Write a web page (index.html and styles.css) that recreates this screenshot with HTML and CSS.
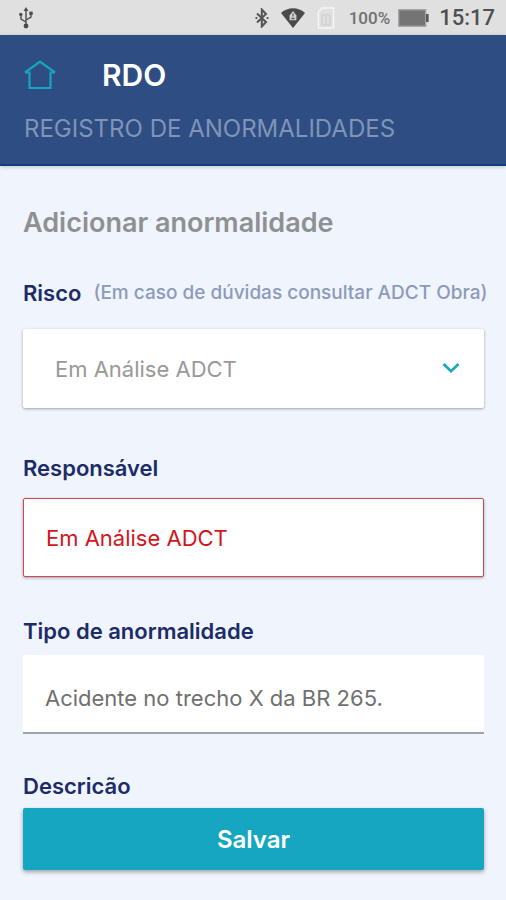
FILE: index.html
```html
<!DOCTYPE html>
<html lang="pt-BR">
<head>
    <meta charset="UTF-8">
    <meta name="viewport" content="width=device-width, initial-scale=1.0">
    <title>RDO - Registro de Anormalidades</title>
    <link rel="stylesheet" href="styles.css">
</head>
<body>
    <!-- Device status bar -->
    <div class="status-bar">
        <svg class="usb-icon" width="16" height="22" viewBox="0 0 16 22" fill="none" stroke="#4c4c4c" stroke-width="1.4">
            <path d="M8 3v15M8 15L3 12V8M8 13l5-3V6" />
            <path d="M8 0l2.4 4H5.6z" fill="#4c4c4c" stroke="none" />
            <circle cx="8" cy="19" r="2.4" fill="#4c4c4c" stroke="none" />
            <circle cx="2.8" cy="7.4" r="1.7" fill="#4c4c4c" stroke="none" />
            <rect x="11.3" y="4.6" width="3.4" height="3.4" fill="#4c4c4c" stroke="none" />
        </svg>
        <div class="status-right">
            <svg width="14" height="20" viewBox="0 0 14 20" fill="none" stroke="#555" stroke-width="2">
                <path d="M2 5.5l9 8.5-4.2 4.5V1.5L11 6l-9 8.5" />
                <path d="M0.5 10h1.8M11.6 10h1.8" />
            </svg>
            <svg class="wifi-icon" width="24" height="20" viewBox="0 0 24 20">
                <path d="M0 5C7-1.2 17-1.2 24 5L12 20z" fill="#4a4a4a" />
                <path d="M12 3l3.4 4.5v4.8H8.6V7.5z" fill="#d2d2d2" />
                <path d="M12 5.5v3M10.3 10.5h3.4" stroke="#666" stroke-width="1.3" />
            </svg>
            <svg class="sim-icon" width="18" height="22" viewBox="0 0 18 22" fill="none" stroke="#f5f5f5" stroke-width="1.6">
                <path d="M5 1h11.5v20H1.5V5z" />
                <path d="M5 8h8v10H5zM9 8v10" stroke="#cdcdcd" stroke-width="1.2" />
            </svg>
            <span class="battery-level">100%</span>
            <svg class="battery-icon" width="31" height="18" viewBox="0 0 31 18">
                <rect x="0.7" y="0.7" width="27" height="16.6" fill="#747474" stroke="#a5a5a5" stroke-width="1.4" />
                <rect x="28" y="5" width="2.6" height="8" fill="#555" />
            </svg>
            <span class="clock">15:17</span>
        </div>
    </div>

    <header class="header">
        <div class="header-top">
            <a href="#" class="home-link" aria-label="Início">
                <svg width="32" height="30" viewBox="0 0 32 30" fill="none" stroke="#16a6bd" stroke-width="2.2">
                    <path d="M1 12.5L16 1.5l15 11" />
                    <path d="M1 12.5h4.5V28h21V12.5H31" />
                </svg>
            </a>
            <h1>RDO</h1>
        </div>
        <p class="subtitle">REGISTRO DE ANORMALIDADES</p>
    </header>

    <main>
        <h2>Adicionar anormalidade</h2>
        <form>
            <div class="form-group risk">
                <div class="label-row">
                    <label for="risco">Risco</label>
                    <span class="hint">(Em caso de dúvidas consultar ADCT Obra)</span>
                </div>
                <div class="select-wrap">
                    <select id="risco">
                        <option>Em Análise ADCT</option>
                    </select>
                    <svg class="chevron" width="18" height="12" viewBox="0 0 18 12" fill="none" stroke="#16a6bd" stroke-width="2.6">
                        <path d="M1.5 2L9 9.3 16.5 2" />
                    </svg>
                </div>
            </div>
            <div class="form-group">
                <label for="responsavel">Responsável</label>
                <input type="text" id="responsavel" class="error" value="Em Análise ADCT">
            </div>
            <div class="form-group compact">
                <label for="tipo">Tipo de anormalidade</label>
                <input type="text" id="tipo" class="underlined" value="Acidente no trecho X da BR 265.">
            </div>
            <div class="form-group actions">
                <span class="label">Descricão</span>
                <button type="submit">Salvar</button>
            </div>
        </form>
    </main>
</body>
</html>
```

FILE: styles.css
```css
/* General Styles */
* {
    box-sizing: border-box;
}

body {
    margin: 0;
    font-family: Inter, sans-serif;
    background: #f0f4fc;
    color: #1c2c68;
}

/* Status bar */
.status-bar {
    display: flex;
    align-items: center;
    justify-content: space-between;
    height: 35px;
    padding: 0 11px 0 18px;
    background: #e0e0e0;
    font-family: Roboto, sans-serif;
    color: #4f4f4f;
}

.status-right {
    display: flex;
    align-items: center;
}

.wifi-icon {
    margin-left: 12px;
}

.sim-icon {
    margin-left: 12px;
}

.battery-level {
    margin-left: 14px;
    font-size: 17px;
    font-weight: 500;
    color: #707070;
}

.battery-icon {
    margin: 0 10px 0 8px;
}

.clock {
    font-size: 22px;
    font-weight: 500;
}

/* Header */
.header {
    padding: 24px 24px 21px;
    background: #2e4d82;
    border-bottom: 2px solid #113d7d;
    box-shadow: 0 1px 4px rgba(0, 0, 0, 0.2);
}

.header-top {
    display: flex;
    align-items: center;
    gap: 46px;
    height: 32px;
}

.home-link {
    display: flex;
}

h1 {
    margin: 0;
    font-size: 30px;
    font-weight: 600;
    color: #fff;
}

.subtitle {
    margin: 24px 0 0;
    font-size: 24px;
    line-height: 28px;
    color: #8094b8;
}

/* Form */
main {
    padding: 41px 22px 28px 23px;
}

h2 {
    margin: 0 0 42px;
    font-size: 27px;
    line-height: 32px;
    font-weight: 600;
    color: #8e9092;
}

.form-group {
    display: flex;
    flex-direction: column;
    gap: 18px;
    margin-bottom: 42px;
}

.form-group.risk {
    gap: 24px;
    margin-bottom: 48px;
}

.form-group.compact {
    gap: 12px;
    margin-bottom: 40px;
}

.form-group.actions {
    gap: 10px;
    margin-bottom: 0;
}

.label-row {
    display: flex;
    align-items: center;
    gap: 12px;
    white-space: nowrap;
}

label, .label {
    font-size: 22px;
    line-height: 24px;
    font-weight: 600;
}

.hint {
    font-size: 19px;
    line-height: 24px;
    font-weight: 500;
    color: #8c9abb;
}

input, select {
    width: 100%;
    height: 79px;
    padding: 0 22px;
    border: 0;
    border-radius: 2px;
    background: #fff;
    font-family: inherit;
    font-size: 22px;
    box-shadow: 0 1px 3px rgba(0, 0, 0, 0.35);
}

.select-wrap {
    position: relative;
}

select {
    appearance: none;
    padding: 0 32px;
    color: #999;
}

.chevron {
    position: absolute;
    right: 24px;
    top: 33px;
    pointer-events: none;
}

input.error {
    border: 1px solid #cf4a50;
    color: #d4151b;
}

input.underlined {
    padding-top: 8px;
    border-bottom: 2px solid #a0a3a9;
    border-radius: 0;
    color: #707070;
    box-shadow: none;
}

button {
    height: 62px;
    border: 0;
    border-radius: 2px;
    background: #16a6c2;
    color: #fff;
    font-family: inherit;
    font-size: 24px;
    font-weight: 600;
    box-shadow: 0 2px 4px rgba(0, 0, 0, 0.35);
}
```
